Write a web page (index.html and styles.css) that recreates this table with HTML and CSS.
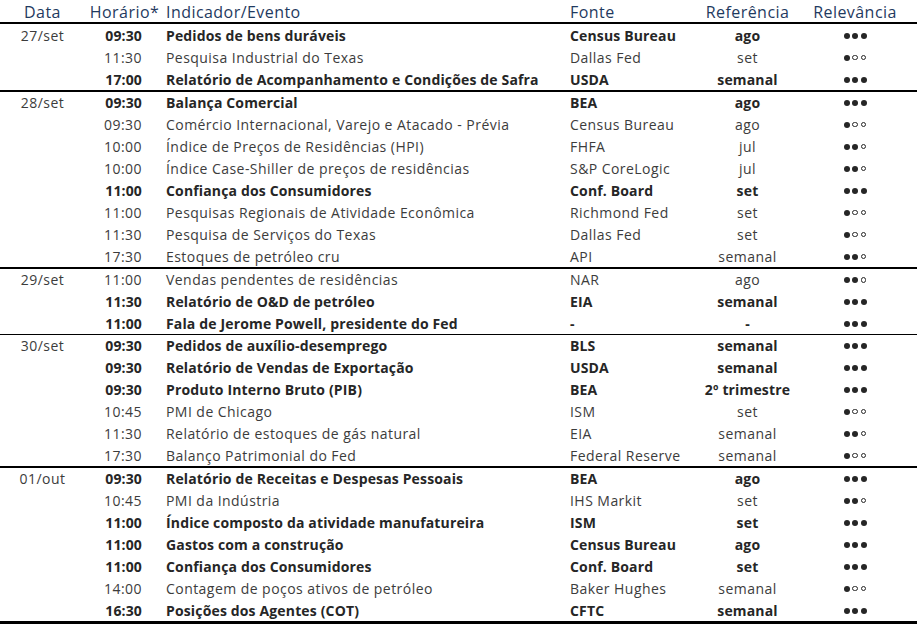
FILE: index.html
```html
<!DOCTYPE html>
<html lang="pt-BR">
<head>
<meta charset="utf-8">
<title>Agenda</title>
<link rel="stylesheet" href="styles.css">
</head>
<body>
<div class="agenda">
  <div class="row head">
    <div class="c-date">Data</div>
    <div class="c-time">Horário*</div>
    <div class="c-ind">Indicador/Evento</div>
    <div class="c-src">Fonte</div>
    <div class="c-ref">Referência</div>
    <div class="c-rel">Relevância</div>
  </div>

  <div class="group first">
    <div class="row b"><div class="c-date">27/set</div><div class="c-time">09:30</div><div class="c-ind">Pedidos de bens duráveis</div><div class="c-src">Census Bureau</div><div class="c-ref">ago</div><div class="c-rel"><i class="d on"></i><i class="d on"></i><i class="d on"></i></div></div>
    <div class="row"><div class="c-date"></div><div class="c-time">11:30</div><div class="c-ind">Pesquisa Industrial do Texas</div><div class="c-src">Dallas Fed</div><div class="c-ref">set</div><div class="c-rel"><i class="d on"></i><i class="d"></i><i class="d"></i></div></div>
    <div class="row b"><div class="c-date"></div><div class="c-time">17:00</div><div class="c-ind">Relatório de Acompanhamento e Condições de Safra</div><div class="c-src">USDA</div><div class="c-ref">semanal</div><div class="c-rel"><i class="d on"></i><i class="d on"></i><i class="d on"></i></div></div>
  </div>

  <div class="group">
    <div class="row b"><div class="c-date">28/set</div><div class="c-time">09:30</div><div class="c-ind">Balança Comercial</div><div class="c-src">BEA</div><div class="c-ref">ago</div><div class="c-rel"><i class="d on"></i><i class="d on"></i><i class="d on"></i></div></div>
    <div class="row"><div class="c-date"></div><div class="c-time">09:30</div><div class="c-ind">Comércio Internacional, Varejo e Atacado - Prévia</div><div class="c-src">Census Bureau</div><div class="c-ref">ago</div><div class="c-rel"><i class="d on"></i><i class="d"></i><i class="d"></i></div></div>
    <div class="row"><div class="c-date"></div><div class="c-time">10:00</div><div class="c-ind">Índice de Preços de Residências (HPI)</div><div class="c-src">FHFA</div><div class="c-ref">jul</div><div class="c-rel"><i class="d on"></i><i class="d on"></i><i class="d"></i></div></div>
    <div class="row"><div class="c-date"></div><div class="c-time">10:00</div><div class="c-ind">Índice Case-Shiller de preços de residências</div><div class="c-src">S&amp;P CoreLogic</div><div class="c-ref">jul</div><div class="c-rel"><i class="d on"></i><i class="d on"></i><i class="d"></i></div></div>
    <div class="row b"><div class="c-date"></div><div class="c-time">11:00</div><div class="c-ind">Confiança dos Consumidores</div><div class="c-src">Conf. Board</div><div class="c-ref">set</div><div class="c-rel"><i class="d on"></i><i class="d on"></i><i class="d on"></i></div></div>
    <div class="row"><div class="c-date"></div><div class="c-time">11:00</div><div class="c-ind">Pesquisas Regionais de Atividade Econômica</div><div class="c-src">Richmond Fed</div><div class="c-ref">set</div><div class="c-rel"><i class="d on"></i><i class="d"></i><i class="d"></i></div></div>
    <div class="row"><div class="c-date"></div><div class="c-time">11:30</div><div class="c-ind">Pesquisa de Serviços do Texas</div><div class="c-src">Dallas Fed</div><div class="c-ref">set</div><div class="c-rel"><i class="d on"></i><i class="d"></i><i class="d"></i></div></div>
    <div class="row"><div class="c-date"></div><div class="c-time">17:30</div><div class="c-ind">Estoques de petróleo cru</div><div class="c-src">API</div><div class="c-ref">semanal</div><div class="c-rel"><i class="d on"></i><i class="d on"></i><i class="d"></i></div></div>
  </div>

  <div class="group open">
    <div class="row"><div class="c-date">29/set</div><div class="c-time">11:00</div><div class="c-ind">Vendas pendentes de residências</div><div class="c-src">NAR</div><div class="c-ref">ago</div><div class="c-rel"><i class="d on"></i><i class="d on"></i><i class="d"></i></div></div>
    <div class="row b"><div class="c-date"></div><div class="c-time">11:30</div><div class="c-ind">Relatório de O&amp;D de petróleo</div><div class="c-src">EIA</div><div class="c-ref">semanal</div><div class="c-rel"><i class="d on"></i><i class="d on"></i><i class="d on"></i></div></div>
    <div class="row b"><div class="c-date"></div><div class="c-time">11:00</div><div class="c-ind">Fala de Jerome Powell, presidente do Fed</div><div class="c-src">-</div><div class="c-ref">-</div><div class="c-rel"><i class="d on"></i><i class="d on"></i><i class="d on"></i></div></div>
  </div>

  <div class="group thin">
    <div class="row b"><div class="c-date">30/set</div><div class="c-time">09:30</div><div class="c-ind">Pedidos de auxílio-desemprego</div><div class="c-src">BLS</div><div class="c-ref">semanal</div><div class="c-rel"><i class="d on"></i><i class="d on"></i><i class="d on"></i></div></div>
    <div class="row b"><div class="c-date"></div><div class="c-time">09:30</div><div class="c-ind">Relatório de Vendas de Exportação</div><div class="c-src">USDA</div><div class="c-ref">semanal</div><div class="c-rel"><i class="d on"></i><i class="d on"></i><i class="d on"></i></div></div>
    <div class="row b"><div class="c-date"></div><div class="c-time">09:30</div><div class="c-ind">Produto Interno Bruto (PIB)</div><div class="c-src">BEA</div><div class="c-ref">2º trimestre</div><div class="c-rel"><i class="d on"></i><i class="d on"></i><i class="d on"></i></div></div>
    <div class="row"><div class="c-date"></div><div class="c-time">10:45</div><div class="c-ind">PMI de Chicago</div><div class="c-src">ISM</div><div class="c-ref">set</div><div class="c-rel"><i class="d on"></i><i class="d"></i><i class="d"></i></div></div>
    <div class="row"><div class="c-date"></div><div class="c-time">11:30</div><div class="c-ind">Relatório de estoques de gás natural</div><div class="c-src">EIA</div><div class="c-ref">semanal</div><div class="c-rel"><i class="d on"></i><i class="d on"></i><i class="d"></i></div></div>
    <div class="row"><div class="c-date"></div><div class="c-time">17:30</div><div class="c-ind">Balanço Patrimonial do Fed</div><div class="c-src">Federal Reserve</div><div class="c-ref">semanal</div><div class="c-rel"><i class="d on"></i><i class="d"></i><i class="d"></i></div></div>
  </div>

  <div class="group last">
    <div class="row b"><div class="c-date">01/out</div><div class="c-time">09:30</div><div class="c-ind">Relatório de Receitas e Despesas Pessoais</div><div class="c-src">BEA</div><div class="c-ref">ago</div><div class="c-rel"><i class="d on"></i><i class="d on"></i><i class="d on"></i></div></div>
    <div class="row"><div class="c-date"></div><div class="c-time">10:45</div><div class="c-ind">PMI da Indústria</div><div class="c-src">IHS Markit</div><div class="c-ref">set</div><div class="c-rel"><i class="d on"></i><i class="d on"></i><i class="d"></i></div></div>
    <div class="row b"><div class="c-date"></div><div class="c-time">11:00</div><div class="c-ind">Índice composto da atividade manufatureira</div><div class="c-src">ISM</div><div class="c-ref">set</div><div class="c-rel"><i class="d on"></i><i class="d on"></i><i class="d on"></i></div></div>
    <div class="row b"><div class="c-date"></div><div class="c-time">11:00</div><div class="c-ind">Gastos com a construção</div><div class="c-src">Census Bureau</div><div class="c-ref">ago</div><div class="c-rel"><i class="d on"></i><i class="d on"></i><i class="d on"></i></div></div>
    <div class="row b"><div class="c-date"></div><div class="c-time">11:00</div><div class="c-ind">Confiança dos Consumidores</div><div class="c-src">Conf. Board</div><div class="c-ref">set</div><div class="c-rel"><i class="d on"></i><i class="d on"></i><i class="d on"></i></div></div>
    <div class="row"><div class="c-date"></div><div class="c-time">14:00</div><div class="c-ind">Contagem de poços ativos de petróleo</div><div class="c-src">Baker Hughes</div><div class="c-ref">semanal</div><div class="c-rel"><i class="d on"></i><i class="d"></i><i class="d"></i></div></div>
    <div class="row b"><div class="c-date"></div><div class="c-time">16:30</div><div class="c-ind">Posições dos Agentes (COT)</div><div class="c-src">CFTC</div><div class="c-ref">semanal</div><div class="c-rel"><i class="d on"></i><i class="d on"></i><i class="d on"></i></div></div>
  </div>
</div>
</body>
</html>
```

FILE: styles.css
```css
html, body {
  margin: 0;
  padding: 0;
  background: #ffffff;
}
body {
  font-family: "Open Sans", "Noto Sans", sans-serif;
  font-size: 14px;
  color: #3c3c3c;
  width: 917px;
}
.agenda {
  display: flex;
  flex-direction: column;
}
.row {
  display: grid;
  grid-template-columns: 85px 75px 402px 138px 95px 122px;
  box-sizing: border-box;
  height: 22px;
  padding-top: 1px;
  align-items: center;
  white-space: nowrap;
  line-height: 1;
  letter-spacing: 0.45px;
}
.row.b {
  font-weight: 700;
  color: #262626;
  letter-spacing: 0.15px;
}
.row.b .c-date {
  font-weight: 400;
  color: #3c3c3c;
  letter-spacing: 0.45px;
}
.head {
  box-sizing: content-box;
  height: 21px;
  font-size: 16px;
  letter-spacing: 0.45px;
  color: #1f3a60;
  border-bottom: 2px solid #000;
}
.head .c-time { text-align: center; padding-right: 0; padding-left: 4px; }
.group {
  display: flex;
  flex-direction: column;
  border-bottom: 2px solid #000;
}
.group .row:first-child { height: 21px; }
.group.first .row:first-child { height: 22px; }
.group.open { border-bottom: 0; }
.group.thin { border-top: 1px solid #000; }
.group.last { border-bottom: 3px solid #000; }
.c-date { text-align: center; }
.c-time { text-align: right; padding-right: 18px; }
.c-ind { padding-left: 6px; }
.c-src { padding-left: 8px; }
.c-ref { text-align: center; }
.c-rel {
  display: flex;
  justify-content: center;
  align-items: center;
  gap: 2.5px;
  padding-right: 2px;
}
.d {
  display: block;
  width: 3.6px;
  height: 3.6px;
  border: 1px solid #262626;
  border-radius: 50%;
  box-sizing: content-box;
}
.d.on {
  width: 6px;
  height: 6px;
  border: 0;
  background: #262626;
}
```
